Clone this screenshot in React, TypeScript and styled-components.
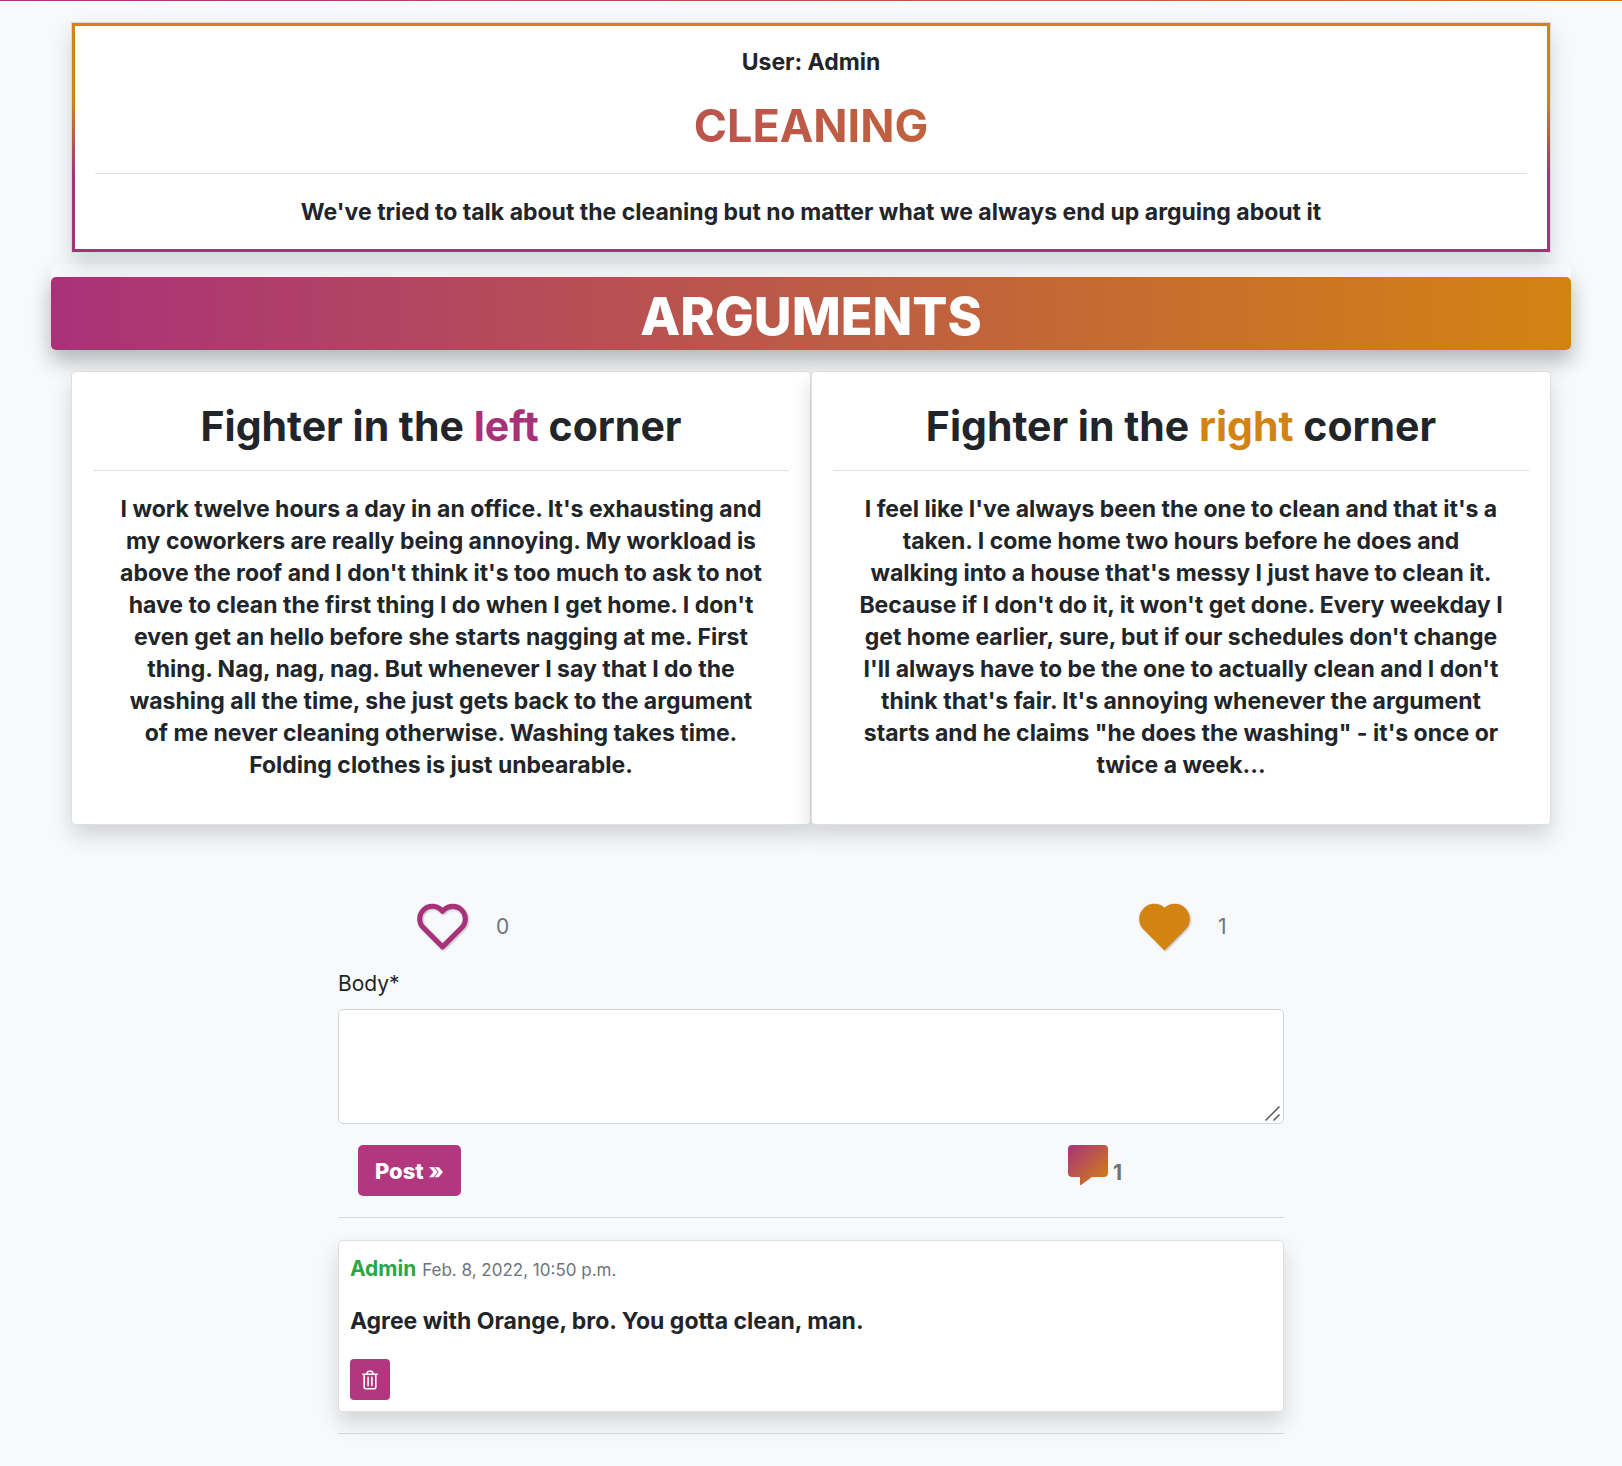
import React, { useState } from 'react';
import styled, { createGlobalStyle } from 'styled-components';
import { BiHeart, BiSolidHeart } from 'react-icons/bi';

const magenta = '#a83279';
const orange = '#d38312';
const ink = '#212529';
const muted = '#6c757d';
const gradient = `linear-gradient(to right, ${magenta}, ${orange})`;
const shadow = '0 11px 21px rgba(0, 0, 0, 0.15)';
const display = `Inter, "Open Sans", sans-serif`;

const GlobalStyle = createGlobalStyle`
  *, *::before, *::after { box-sizing: border-box; }
  body {
    margin: 0;
    background: #f8f9fb;
    color: ${ink};
    font: 400 21px/32px Inter, "Noto Sans", sans-serif;
  }
  h1, h2, h3, p { margin: 0; }
`;

const TopLine = styled.div`
  height: 1px;
  background: linear-gradient(to right, ${magenta}, ${orange} 120%);
`;

const Page = styled.main`
  padding: 21px 51px 32px;
`;

const Card = styled.section`
  background: #fff;
  border: 1px solid rgba(0, 0, 0, 0.125);
  border-radius: 5px;
  box-shadow: ${shadow};
`;

const TopicCard = styled(Card)`
  margin: 0 20px;
  border-radius: 0;
  background: #f8f9fb;
`;

const TopicFrame = styled.div`
  border: 3px solid;
  border-image: linear-gradient(${orange} 33%, ${magenta} 66%) 3;
  background: #fff;
  padding: 20px 20px 21px;
  text-align: center;
`;

const Strong = styled.p`
  font-family: ${display};
  font-size: 23px;
  font-weight: 700;
  line-height: 32px;
`;

const TopicTitle = styled.h1`
  margin: 22px 0 21px;
  font: 700 45px/52px ${display};
  background: ${gradient};
  background-clip: text;
  -webkit-background-clip: text;
  color: transparent;
`;

const Rule = styled.hr`
  width: 100%;
  margin: 0;
  border: 0;
  border-top: 1px solid rgba(0, 0, 0, 0.12);
`;

const TopicText = styled(Strong)`
  margin-top: 22px;
`;

const BannerWrap = styled.div`
  margin-top: 11px;
  padding-top: 13px;
  border-radius: 5px;
  box-shadow: ${shadow};
`;

const Banner = styled.h2`
  height: 73px;
  border-radius: 5px;
  background: ${gradient};
  box-shadow: ${shadow};
  color: #fff;
  text-align: center;
  font: 800 52px/80px ${display};
`;

const Corners = styled.div`
  display: grid;
  grid-template-columns: 1fr 1fr;
  margin: 21px 20px 0;
`;

const Corner = styled(Card)`
  padding: 21px 21px 43px;
  text-align: center;
`;

const CornerTitle = styled.h3`
  padding: 10px 0 21px;
  font: 700 41px/46px ${display};
`;

const Accent = styled.span<{ $color: string }>`
  color: ${(p) => p.$color};
`;

const Argument = styled(Strong)`
  padding: 22px 24px 0;
`;

const Votes = styled.div`
  display: grid;
  grid-template-columns: 1fr 1fr;
  margin: 71px 27px 0 49px;
`;

const Vote = styled.div`
  display: flex;
  justify-content: center;
  align-items: center;
  gap: 23px;
  color: ${muted};
`;

const HeartButton = styled.button<{ $color: string }>`
  display: flex;
  padding: 0;
  border: 0;
  background: none;
  color: ${(p) => p.$color};
  cursor: pointer;
  filter: drop-shadow(1px 1px 1px rgba(0, 0, 0, 0.25));
`;

const Count = styled.span`
  width: 14px;
`;

const Thread = styled.div`
  width: 62.25%;
  margin: 11px auto 0;
`;

const Label = styled.label`
  display: block;
  margin-bottom: 9px;
`;

const Field = styled.div`
  position: relative;
`;

const TextBox = styled.textarea`
  display: block;
  width: 100%;
  height: 115px;
  padding: 8px 16px;
  border: 1px solid #ced4da;
  border-radius: 5px;
  background: #fff;
  font: inherit;
  color: ${ink};
  resize: vertical;

  &::-webkit-resizer {
    background: transparent;
  }
`;

const Grip = styled.svg`
  position: absolute;
  right: 4px;
  bottom: 3px;
  pointer-events: none;
`;

const Actions = styled.div`
  display: grid;
  grid-template-columns: 2fr 1fr;
  padding: 21px 20px;
`;

const PostButton = styled.button`
  justify-self: start;
  height: 51px;
  padding: 0 17px;
  border: 0;
  border-radius: 5px;
  background: #b3377f;
  color: #fff;
  font: 800 22px/32px ${display};
  cursor: pointer;
`;

const Comments = styled.div`
  display: flex;
  justify-content: center;
  align-items: flex-start;
  gap: 5px;
  padding-right: 36px;
  color: ${muted};
  font-weight: 700;
`;

const CommentCount = styled.span`
  padding-top: 12px;
`;

const Comment = styled(Card)`
  margin: 22px 0 21px;
  padding: 11px;
`;

const Meta = styled.div`
  padding: 1px 0;
`;

const Author = styled.strong`
  color: #28a745;
`;

const Stamp = styled.time`
  color: ${muted};
  font-size: 17px;
`;

const CommentText = styled(Strong)`
  margin: 18px 0 22px;
`;

const DeleteButton = styled.button`
  display: flex;
  align-items: center;
  justify-content: center;
  width: 40px;
  height: 41px;
  padding: 0;
  border: 0;
  border-radius: 4px;
  background: #b3377f;
  color: #fff;
  cursor: pointer;
`;

const BubbleIcon = () => (
  <svg width="40" height="40" viewBox="0 0 40 40" aria-hidden="true">
    <defs>
      <linearGradient id="bubble" x1="0" y1="0" x2="1" y2="1">
        <stop offset="0" stopColor={magenta} />
        <stop offset="1" stopColor={orange} />
      </linearGradient>
    </defs>
    <path fill="url(#bubble)" d="M4 0h32a4 4 0 0 1 4 4v24a4 4 0 0 1-4 4H24L13 40h-1v-8H4a4 4 0 0 1-4-4V4a4 4 0 0 1 4-4z" />
  </svg>
);

const TrashIcon = () => (
  <svg width="16" height="20" viewBox="0 0 16 20" fill="none" stroke="currentColor" strokeWidth="1.6" strokeLinejoin="round" strokeLinecap="round" aria-hidden="true">
    <path d="M.8 4.200h14.400M4.900 4L5.400 2.200Q5.700 1.200 6.700 1.200h2.600q1 0 1.300 1L11.100 4M2.200 4.200V17.200q0 1.500 1.500 1.500h8.600q1.500 0 1.500-1.500V4.200M6.100 7.200v8.400M9.900 7.200v8.400" />
  </svg>
);

const corners = [
  {
    side: 'left',
    color: magenta,
    text: "I work twelve hours a day in an office. It's exhausting and my coworkers are really being annoying. My workload is above the roof and I don't think it's too much to ask to not have to clean the first thing I do when I get home. I don't even get an hello before she starts nagging at me. First thing. Nag, nag, nag. But whenever I say that I do the washing all the time, she just gets back to the argument of me never cleaning otherwise. Washing takes time. Folding clothes is just unbearable.",
  },
  {
    side: 'right',
    color: orange,
    text: "I feel like I've always been the one to clean and that it's a taken. I come home two hours before he does and walking into a house that's messy I just have to clean it. Because if I don't do it, it won't get done. Every weekday I get home earlier, sure, but if our schedules don't change I'll always have to be the one to actually clean and I don't think that's fair. It's annoying whenever the argument starts and he claims \"he does the washing\" - it's once or twice a week...",
  },
];

function HeartVote({ color, initial, label }: { color: string; initial: boolean; label: string }) {
  const [liked, setLiked] = useState(initial);
  const Icon = liked ? BiSolidHeart : BiHeart;
  return (
    <Vote>
      <HeartButton $color={color} aria-label={label} aria-pressed={liked} onClick={() => setLiked(!liked)}>
        <Icon size={61} />
      </HeartButton>
      <Count>{liked ? 1 : 0}</Count>
    </Vote>
  );
}

export default function App() {
  return (
    <>
      <GlobalStyle />
      <TopLine />
      <Page>
        <TopicCard>
          <TopicFrame>
            <Strong>User: Admin</Strong>
            <TopicTitle>CLEANING</TopicTitle>
            <Rule />
            <TopicText>We've tried to talk about the cleaning but no matter what we always end up arguing about it</TopicText>
          </TopicFrame>
        </TopicCard>
        <BannerWrap>
          <Banner>ARGUMENTS</Banner>
        </BannerWrap>
        <Corners>
          {corners.map((c) => (
            <Corner key={c.side}>
              <CornerTitle>
                Fighter in the <Accent $color={c.color}>{c.side}</Accent> corner
              </CornerTitle>
              <Rule />
              <Argument>{c.text}</Argument>
            </Corner>
          ))}
        </Corners>
        <Votes>
          <HeartVote color={magenta} initial={false} label="Like left corner" />
          <HeartVote color={orange} initial label="Like right corner" />
        </Votes>
        <Thread>
          <form onSubmit={(e) => e.preventDefault()}>
            <Label htmlFor="body">Body*</Label>
            <Field>
              <TextBox id="body" name="body" required />
              <Grip width="15" height="15" viewBox="0 0 15 15" stroke="#555" strokeWidth="1.5" aria-hidden="true">
                <path d="M.5 14.500L14.500.5M8.500 14.500l6-6" />
              </Grip>
            </Field>
            <Actions>
              <PostButton type="submit">Post »</PostButton>
              <Comments>
                <BubbleIcon />
                <CommentCount>1</CommentCount>
              </Comments>
            </Actions>
          </form>
          <Rule />
          <Comment>
            <Meta>
              <Author>Admin</Author> <Stamp dateTime="2022-02-08T22:50">Feb. 8, 2022, 10:50 p.m.</Stamp>
            </Meta>
            <CommentText>Agree with Orange, bro. You gotta clean, man.</CommentText>
            <DeleteButton type="button" aria-label="Delete comment">
              <TrashIcon />
            </DeleteButton>
          </Comment>
          <Rule />
        </Thread>
      </Page>
    </>
  );
}
